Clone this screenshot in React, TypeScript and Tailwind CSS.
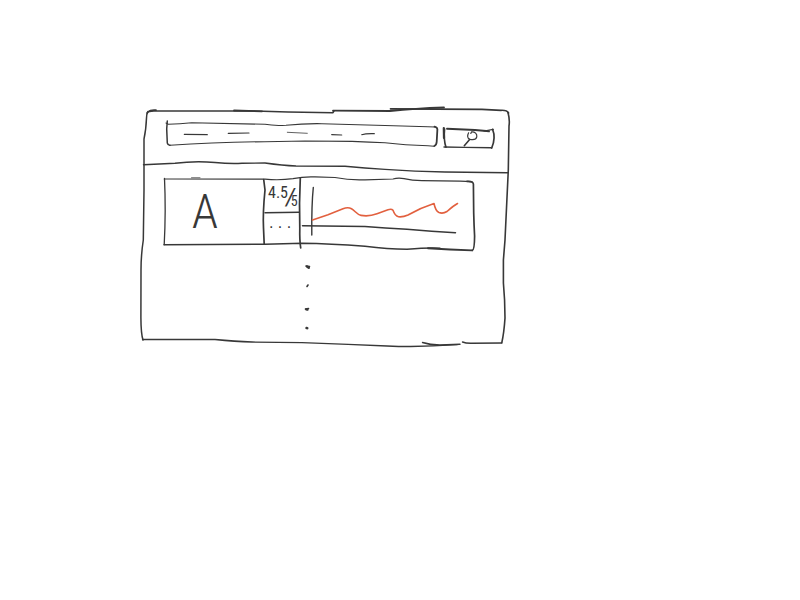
import type { ReactNode } from "react";

type InkProps = { viewBox: string; className?: string; children: ReactNode };

// Pen strokes laid over the box that they outline; they stretch with it.
function Ink({ viewBox, className = "absolute inset-0", children }: InkProps) {
  return (
    <svg
      viewBox={viewBox}
      preserveAspectRatio="none"
      aria-hidden="true"
      className={`pointer-events-none h-full w-full overflow-visible ${className}`}
      fill="none"
      stroke="#383838"
      strokeWidth="1.2"
      strokeLinecap="round"
      strokeLinejoin="round"
    >
      {children}
    </svg>
  );
}

function SearchBar() {
  return (
    <form className="flex h-[26px] gap-1" onSubmit={(e) => e.preventDefault()}>
      <div className="relative min-w-0 flex-1">
        <input
          type="search"
          aria-label="Search"
          className="h-full w-full bg-transparent px-4 text-sm outline-none"
        />
        <Ink viewBox="164 123 275 26">
          <path strokeWidth="1.5" d="M167.3 121L166.7 129L167.3 143Q168 145.5 170 145.3" />
          <path strokeWidth="1.1" d="M166 123L168.3 124.2Q180 124 191.7 122.7L265 124.3Q274 126 286 125.2Q304 123.4 322 123.7L385 125.5L428 126.7L435 127" />
          <path strokeWidth="1.8" d="M434.5 126.7Q438 127.5 437.3 131L436.7 141.7Q436.5 145 434.3 146" />
          <path strokeWidth="1.1" d="M170 145.2Q215 142.2 265 141.7L305 141L352 141.4Q370 142.3 385 142.7Q405 145 428 145.7L434 146.2" />
          <path d="M184.3 134.3L207.3 134.7M228.3 133.4L249 133" />
          <path strokeWidth="0.8" d="M287.3 132.3L307.3 133.3" />
          <path d="M331.7 134.6L341.7 135M361.7 134.7Q366 133.4 374.3 133.7" />
        </Ink>
      </div>
      <button type="submit" aria-label="Submit search" className="relative w-[52px]">
        <Ink viewBox="443 123 52 26">
          <path strokeWidth="2.2" d="M443.8 128L444 138" />
          <path strokeWidth="1.6" d="M444.6 129Q443.5 140 446 147.3" />
          <path strokeWidth="1.9" d="M447 128.8L475 130L489 131.3" />
          <path d="M484 131L493.3 129.3" />
          <path strokeWidth="1.7" d="M492.6 129.3Q496 138 491.7 148" />
          <path strokeWidth="1.4" d="M444 147L465 147.4L491.7 147.7" />
          <path d="M468.6 132.8C467.2 135.5 467.2 138.6 469.8 139.3C473 140 476.2 139.4 476.8 136.8C477.2 134 475 131.6 471.5 131.9L470.8 133.4" />
          <path strokeWidth="1.6" d="M469.8 139.3L464.3 145.7" />
        </Ink>
      </button>
    </form>
  );
}

function Rating() {
  return (
    <p className="flex h-9 items-start pl-1 pt-1">
      <span className="text-base leading-6">4.5</span>
      <span className="-ml-0.5 pt-1 text-2xl italic leading-6">/</span>
      <span className="-ml-1 pt-3 text-sm leading-4">5</span>
    </p>
  );
}

function ResultCard() {
  return (
    <article className="relative flex h-[74px]">
      <h2 className="flex w-[102px] items-center justify-center pb-1 pr-4 text-5xl font-light">A</h2>
      <div className="flex w-9 flex-col">
        <Rating />
        <button type="button" aria-label="More" className="h-5 pr-1 font-['Liberation_Sans',sans-serif] text-base leading-5">
          . . .
        </button>
      </div>
      <figure className="relative min-w-0 flex-1" aria-label="Rating over time">
        <Ink viewBox="300 177 175 74">
          <path strokeWidth="1.4" d="M313.3 187.5Q311.5 205 311.8 235" />
          <path strokeWidth="1.5" d="M302.5 225.7L365 226.5Q385 228 407 229.3Q432 231.5 455.5 232.7" />
          <path
            stroke="#e2603f"
            strokeWidth="1.6"
            d="M312.5 220L328 214.8L343 208.8Q348 206.8 351.5 208.8C355 210.7 357 214.7 361 215.4Q369 216.8 377 213.8L388 209.7Q391.5 208.5 393 210.3Q395 216 398.5 216.8Q403 217.3 408 215Q420 208 434 203.5Q435.5 211 439 212.6Q443 214 447 211.5Q453 206 457.5 203.5"
          />
        </Ink>
      </figure>
      <Ink viewBox="162 177 313 74">
        <path strokeWidth="1.3" d="M164.5 178.5Q166 210 164.2 244.7" />
        <path d="M164.3 179L265 179.2Q280 180.5 293 178.6Q304 176.4 315 176.9L335 177.5Q350 180.5 365 179.8L393 179Q398 177.5 404 178.6Q412 180.5 422 180.7L460 181.2L471.7 181.7" />
        <path strokeWidth="0.7" d="M191.5 177.7L200 177.7" />
        <path strokeWidth="1.7" d="M467 181.4Q473 181 473.4 184L473.7 213Q474 226 474.6 236Q474.5 250 472.3 250.4" />
        <path strokeWidth="1.4" d="M164 244.7L265 244.2L302 243.2Q330 243.6 365 246.2Q388 249 407 249.2Q430 247.5 440 248.3" />
        <path strokeWidth="1.9" d="M428 248.3Q450 249.8 472 250.4" />
        <path strokeWidth="1.7" d="M263.7 179.5L265 190Q262.7 213 263.5 228L264.2 244" />
        <path strokeWidth="1.7" d="M300.3 178Q299 204 299.8 228Q299.5 240 300.7 247.8" />
        <path strokeWidth="1.4" d="M265 212.7L299.3 212.3" />
      </Ink>
    </article>
  );
}

export default function App() {
  return (
    <div className="min-h-screen bg-white pl-[140px] pt-[107px] font-['Liberation_Sans_Narrow','Roboto_Condensed','Roboto',sans-serif] text-[#383838]">
      <div className="relative w-full max-w-[370px]">
        <Ink viewBox="140 107 370 241">
          <path strokeWidth="1.6" d="M147 113Q148 110.5 157 111L255 111L288 112L333 112.7L334 110.8M149 111.3Q150 109.6 156 110" />
          <path strokeWidth="1.8" d="M234 110.5L262 111.3M333 110.7L390 111Q415 108.5 444 107.5" />
          <path strokeWidth="1.7" d="M390.5 108.8L482 109.4L501 110.3Q507 110 508.5 113" />
          <path strokeWidth="1.6" d="M508 112.5Q510 120 509 126L508.3 170L505 240L503.4 260L503.4 283Q505 300 505 318Q504 333 501.8 342.7" />
          <path strokeWidth="1.5" d="M148 111.5Q146.5 114 146.5 118Q146 130 144 139L144 190L143.3 240Q141 255 141 270L140.9 318Q141 334 143 340" />
          <path strokeWidth="1.3" d="M142.5 339.5L215 339.5Q235 341.5 252 342L302 342.7L348 344.4L387 346Q420 347.5 457 344.7" />
          <path strokeWidth="1.4" d="M422.5 342.5Q430 345 440 345L460 344.3M462.5 342Q466 343.5 472 343.3L501.7 343" />
        </Ink>

        <header className="relative pb-6 pl-6 pr-[15px] pt-4">
          <SearchBar />
          <Ink viewBox="140 107 370 66">
            <path strokeWidth="1.4" d="M143.5 164.8L175 163.3Q195 160.6 215 162.5Q230 164 242 163.3L265 163Q283 165.5 296 166L345 166.2Q365 168 385 169.4Q415 171.8 445 172L507.7 172.8" />
          </Ink>
        </header>

        <main className="pl-[22px] pr-[35px] pt-1">
          <ResultCard />
          <div className="h-[97px]">
            <Ink viewBox="162 251 313 97" className="block">
              <path strokeWidth="2.4" d="M307 266.5L308.8 267.8M306.3 309.3L307.4 309.6M306.5 328L307.3 328.2" />
              <path strokeWidth="1.6" d="M306 266L309.5 266.5M307 286.5L308 285M305.5 309L308.5 308.5" />
            </Ink>
          </div>
        </main>
      </div>
    </div>
  );
}
